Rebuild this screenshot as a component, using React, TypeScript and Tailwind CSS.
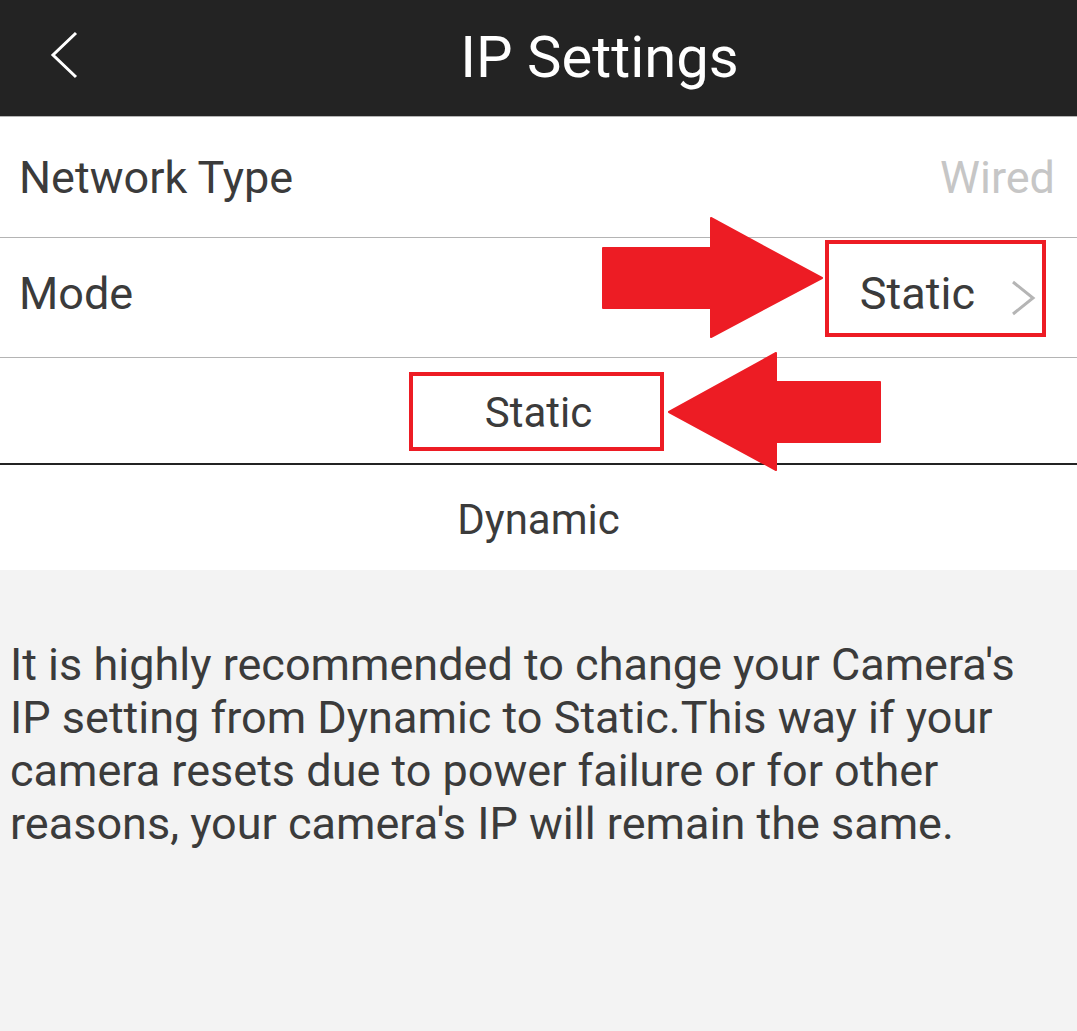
import React from "react";

const font = { fontFamily: "Roboto, 'Noto Sans', sans-serif" };

export default function App() {
  return (
    <div className="relative w-[1077px] h-[1031px] bg-[#f3f3f3] overflow-hidden" style={font}>
      {/* Header */}
      <div className="relative h-[116px] bg-[#232323] flex items-center justify-center pl-[122px]">
        <svg className="absolute left-[46px] top-[30px]" width="36" height="50" viewBox="0 0 36 50">
          <polyline points="30,3 7,25 30,47" fill="none" stroke="#ffffff" strokeWidth="3" />
        </svg>
        <span className="text-white text-[58px] leading-none mt-[-2px]">IP Settings</span>
      </div>
      <div className="h-px bg-[#b4b4b4]" />
      {/* Network type */}
      <div className="h-[120px] bg-white flex items-center justify-between pl-[19px] pr-[22px]">
        <span className="text-[45px] text-[#3b3b3b] mt-[2px]">Network Type</span>
        <span className="text-[45px] text-[#c6c6c6] mt-[2px]">Wired</span>
      </div>
      <div className="h-px bg-[#b4b4b4]" />
      {/* Mode */}
      <div className="h-[119px] bg-white flex items-center justify-between pl-[19px] pr-[40px]">
        <span className="text-[45px] text-[#3b3b3b] mt-[-8px]">Mode</span>
        <div className="flex items-center gap-[34px] mt-[-8px]">
          <span className="text-[45px] text-[#3b3b3b]">Static</span>
          <svg width="28" height="36" viewBox="0 0 28 36" className="mt-[8px]">
            <polyline points="4,2 24,18 4,34" fill="none" stroke="#b5b5b5" strokeWidth="3" />
          </svg>
        </div>
      </div>
      <div className="h-px bg-[#b4b4b4]" />
      {/* Static option */}
      <div className="h-[105px] bg-white flex items-center justify-center">
        <span className="text-[42px] text-[#3b3b3b] mt-[3px]">Static</span>
      </div>
      <div className="h-[2px] bg-[#232323]" />
      {/* Dynamic option */}
      <div className="h-[105px] bg-white flex items-center justify-center">
        <span className="text-[42px] text-[#3b3b3b] mt-[4px]">Dynamic</span>
      </div>
      {/* Note */}
      <div className="pt-[68px] pl-[10px] pr-[20px]">
        <p className="text-[45px] leading-[53px] text-[#3b3b3b]">
          It is highly recommended to change your Camera's IP setting from Dynamic to Static.This way if your camera resets due to power failure or for other reasons, your camera's IP will remain the same.
        </p>
      </div>

      {/* Annotations */}
      <div className="absolute left-[825px] top-[240px] w-[221px] h-[97px] border-[4px] border-[#ed1c24]" />
      <div className="absolute left-[409px] top-[372px] w-[255px] h-[79px] border-[4px] border-[#ed1c24]" />
      <svg className="absolute left-0 top-0 pointer-events-none" width="1077" height="1031" viewBox="0 0 1077 1031">
        <polygon points="603,248 711,248 711,218 822,278 711,337 711,308 603,308" fill="#ed1c24" stroke="#ed1c24" strokeWidth="2" strokeLinejoin="round" />
        <polygon points="880,382 776,382 776,353 669,412 776,470 776,442 880,442" fill="#ed1c24" stroke="#ed1c24" strokeWidth="2" strokeLinejoin="round" />
      </svg>
    </div>
  );
}
